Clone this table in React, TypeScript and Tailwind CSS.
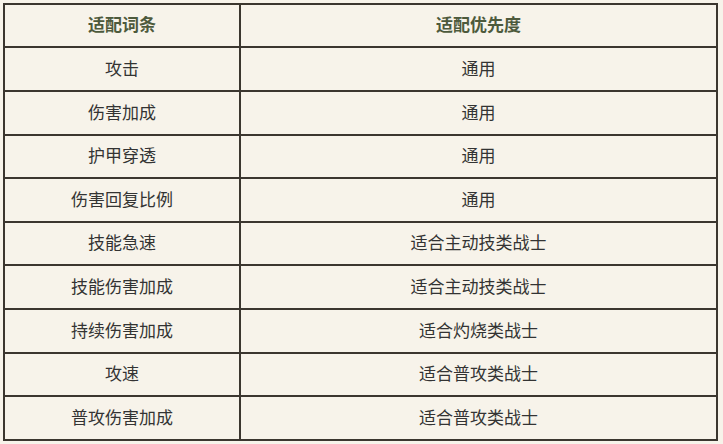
import React from "react";

const rows: [string, string][] = [
  ["攻击", "通用"],
  ["伤害加成", "通用"],
  ["护甲穿透", "通用"],
  ["伤害回复比例", "通用"],
  ["技能急速", "适合主动技类战士"],
  ["技能伤害加成", "适合主动技类战士"],
  ["持续伤害加成", "适合灼烧类战士"],
  ["攻速", "适合普攻类战士"],
  ["普攻伤害加成", "适合普攻类战士"],
];

export default function App() {
  return (
    <div
      className="w-[723px] h-[444px] bg-[#f7f3ea] pl-[3px] pt-[3px]"
      style={{ fontFamily: '"Microsoft YaHei", "Noto Sans CJK SC", sans-serif' }}
    >
      <table className="w-[715px] border-collapse border-[2px] border-[#3b362f] text-[17px] text-[#333]">
        <thead>
          <tr className="h-[43.4px]">
            <th className="w-[236px] border-[2px] border-[#3b362f] font-bold text-[#4d5a3c] text-center pb-[3px]">
              适配词条
            </th>
            <th className="border-[2px] border-[#3b362f] font-bold text-[#4d5a3c] text-center pb-[3px]">
              适配优先度
            </th>
          </tr>
        </thead>
        <tbody>
          {rows.map(([a, b]) => (
            <tr key={a} className="h-[43.6px]">
              <td className="border-[2px] border-[#3b362f] text-center pb-[3px]">{a}</td>
              <td className="border-[2px] border-[#3b362f] text-center pb-[3px]">{b}</td>
            </tr>
          ))}
        </tbody>
      </table>
    </div>
  );
}
